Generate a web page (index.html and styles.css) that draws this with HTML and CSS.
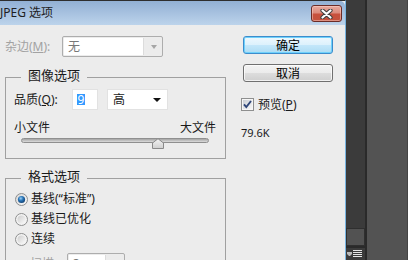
FILE: index.html
```html
<!DOCTYPE html>
<html>
<head>
    <title>JPEG 选项</title>
    <link rel="stylesheet" href="styles.css">
</head>
<body>
    <div class="screen">
        <div class="dialog">
            <div class="titlebar">
                <span class="title">JPEG 选项</span>
                <button class="close-btn" type="button">
                    <svg width="13" height="10" viewBox="0 0 13 10">
                        <path d="M2.5 1.5 L10.5 8.5 M10.5 1.5 L2.5 8.5" stroke="#3e3e3e" stroke-width="4.2" stroke-linecap="round"/>
                        <path d="M2.5 1.5 L10.5 8.5 M10.5 1.5 L2.5 8.5" stroke="#ffffff" stroke-width="2.2" stroke-linecap="round"/>
                    </svg>
                </button>
            </div>

            <div class="client">
                <div class="main-col">
                    <div class="matte-row">
                        <label class="field-label disabled">杂边(<u>M</u>):</label>
                        <div class="combo disabled matte-combo">
                            <span class="combo-field">无</span>
                            <span class="combo-arrow"></span>
                        </div>
                    </div>

                    <div class="group image-group">
                        <div class="group-title">图像选项</div>
                        <div class="quality-row">
                            <label class="quality-label">品质(<u>Q</u>):</label>
                            <div class="num-field"><span class="selected-text">9</span></div>
                            <div class="select-box">
                                <span class="select-value">高</span>
                                <span class="select-arrow"></span>
                            </div>
                        </div>
                        <div class="size-labels">
                            <span>小文件</span>
                            <span>大文件</span>
                        </div>
                        <div class="slider">
                            <div class="slider-track"></div>
                            <svg class="slider-thumb" width="12" height="11" viewBox="0 0 12 11">
                                <defs>
                                    <linearGradient id="thumbGrad" x1="0" y1="0" x2="0" y2="1">
                                        <stop offset="0" stop-color="#f4f4f4"/>
                                        <stop offset="1" stop-color="#cfcfcf"/>
                                    </linearGradient>
                                </defs>
                                <path d="M0.5 10.5 L0.5 5 L6 0.7 L11.5 5 L11.5 10.5 Z" fill="url(#thumbGrad)" stroke="#8a8a8a"/>
                            </svg>
                        </div>
                    </div>

                    <div class="group format-group">
                        <div class="group-title">格式选项</div>
                        <div class="radio-row">
                            <svg class="radio" width="13" height="13" viewBox="0 0 13 13">
                                <defs>
                                    <linearGradient id="radioOn" x1="0" y1="0" x2="1" y2="1">
                                        <stop offset="0" stop-color="#d4d4d4"/>
                                        <stop offset="1" stop-color="#fbfbfb"/>
                                    </linearGradient>
                                    <radialGradient id="dotGrad" cx="0.4" cy="0.35" r="0.7">
                                        <stop offset="0" stop-color="#9ad0f5"/>
                                        <stop offset="0.45" stop-color="#2a76b8"/>
                                        <stop offset="1" stop-color="#0f3c6c"/>
                                    </radialGradient>
                                </defs>
                                <circle cx="6.5" cy="6.5" r="6" fill="url(#radioOn)" stroke="#8e8f8f"/>
                                <circle cx="6.5" cy="6.5" r="3.6" fill="url(#dotGrad)"/>
                            </svg>
                            <span>基线(“标准”)</span>
                        </div>
                        <div class="radio-row">
                            <svg class="radio" width="13" height="13" viewBox="0 0 13 13">
                                <defs>
                                    <linearGradient id="radioOff1" x1="0" y1="0" x2="1" y2="1">
                                        <stop offset="0" stop-color="#cdcdcd"/>
                                        <stop offset="1" stop-color="#fafafa"/>
                                    </linearGradient>
                                </defs>
                                <circle cx="6.5" cy="6.5" r="6" fill="#f2f2f2" stroke="#8e8f8f"/>
                                <circle cx="6.5" cy="6.5" r="4" fill="url(#radioOff1)"/>
                            </svg>
                            <span>基线已优化</span>
                        </div>
                        <div class="radio-row">
                            <svg class="radio" width="13" height="13" viewBox="0 0 13 13">
                                <defs>
                                    <linearGradient id="radioOff2" x1="0" y1="0" x2="1" y2="1">
                                        <stop offset="0" stop-color="#cdcdcd"/>
                                        <stop offset="1" stop-color="#fafafa"/>
                                    </linearGradient>
                                </defs>
                                <circle cx="6.5" cy="6.5" r="6" fill="#f2f2f2" stroke="#8e8f8f"/>
                                <circle cx="6.5" cy="6.5" r="4" fill="url(#radioOff2)"/>
                            </svg>
                            <span>连续</span>
                        </div>
                        <div class="scan-row">
                            <label class="scan-label disabled">扫描:</label>
                            <div class="combo disabled scan-combo">
                                <span class="combo-field">3</span>
                                <span class="combo-arrow"></span>
                            </div>
                        </div>
                    </div>
                </div>

                <div class="side-col">
                    <button class="btn btn-default" type="button">确定</button>
                    <button class="btn" type="button">取消</button>
                    <label class="check-row">
                        <svg class="checkbox" width="13" height="13" viewBox="0 0 13 13">
                            <defs>
                                <linearGradient id="checkGrad" x1="0" y1="0" x2="1" y2="1">
                                    <stop offset="0" stop-color="#cbcfd5"/>
                                    <stop offset="1" stop-color="#f7f7f7"/>
                                </linearGradient>
                            </defs>
                            <rect x="0.5" y="0.5" width="12" height="12" fill="#f6f6f6" stroke="#8e8f8f"/>
                            <rect x="2" y="2" width="9" height="9" fill="url(#checkGrad)"/>
                            <path d="M3 6.3 L5.3 9 L10 3" fill="none" stroke="#2f4679" stroke-width="1.9"/>
                        </svg>
                        <span>预览(<u>P</u>)</span>
                    </label>
                    <div class="size-info">79.6K</div>
                </div>
            </div>
        </div>

        <div class="panel-strip">
            <div class="strip-fill"></div>
            <div class="strip-thumb"></div>
            <div class="strip-foot">
                <svg width="5" height="5" viewBox="0 0 5 5">
                    <path d="M0 0 H5 V2 L3 4 H2 L0 2 Z" fill="#b8b8b8"/>
                </svg>
                <svg width="9" height="8" viewBox="0 0 9 8">
                    <rect x="0" y="0" width="9" height="1" fill="#e6e6e6"/>
                    <rect x="0" y="2" width="9" height="1" fill="#e6e6e6"/>
                    <rect x="0" y="4" width="9" height="1" fill="#e6e6e6"/>
                    <rect x="0" y="6" width="9" height="1" fill="#e6e6e6"/>
                </svg>
            </div>
        </div>
        <div class="panel-main"></div>
    </div>
</body>
</html>
```

FILE: styles.css
```css
* {
    box-sizing: border-box;
}

html,
body {
    margin: 0;
}

body {
    width: 408px;
    height: 260px;
    overflow: hidden;
    background-color: #535353;
    font-family: "Noto Sans", "Noto Sans CJK SC", sans-serif;
    font-size: 12px;
    color: #1a1a1a;
}

.screen {
    display: flex;
    height: 260px;
}

/* dialog window */

.dialog {
    width: 346px;
    display: flex;
    flex-direction: column;
    background-color: #ececec;
    border-top: 1px solid #2e2e2e;
    border-right: 1px solid #78b5e2;
}

.titlebar {
    height: 24px;
    display: flex;
    align-items: flex-start;
    background: linear-gradient(#92b0d4, #bcd3eb);
    border-top-right-radius: 5px;
}

.title {
    line-height: 24px;
    color: #1e1e1e;
}

.close-btn {
    margin: 4px 3px 0 auto;
    width: 31px;
    height: 17px;
    padding: 0;
    display: flex;
    align-items: center;
    justify-content: center;
    border: 1px solid #6b2c27;
    border-radius: 3px;
    background: linear-gradient(#e8aa9f 0%, #dc8b7d 45%, #c8503d 55%, #c4533f 100%);
    box-shadow: inset 0 0 0 1px rgba(255, 220, 210, 0.45);
}

.client {
    flex: 1;
    display: flex;
    gap: 15px;
    padding-top: 11px;
}

.main-col {
    width: 226px;
    padding-left: 5px;
}

.disabled {
    color: #a2a2a2;
}

.matte-row {
    display: flex;
    align-items: center;
    height: 21px;
}

.field-label {
    width: 57px;
    line-height: 16px;
}

.combo {
    display: flex;
    height: 21px;
    border: 1px solid #adadad;
    border-radius: 2px;
    background-color: #ececec;
}

.combo-field {
    flex: 1;
    margin: 1px;
    padding-left: 4px;
    line-height: 17px;
    background-color: #fff;
    border-right: 1px solid #dcdcdc;
}

.combo.disabled .combo-field {
    color: #777;
}

.combo-arrow {
    width: 17px;
    display: flex;
    align-items: center;
    justify-content: center;
}

.combo-arrow::after {
    content: "";
    border-left: 3px solid transparent;
    border-right: 3px solid transparent;
    border-top: 4px solid #a6a6a6;
}

.matte-combo {
    width: 101px;
}

/* group boxes */

.group {
    width: 221px;
    border: 1px solid #a0a0a0;
}

.group-title {
    width: fit-content;
    margin: -11px 0 0 15px;
    padding: 0 7px;
    font-size: 13px;
    line-height: 16px;
    background-color: #ececec;
}

.image-group {
    margin-top: 20px;
    padding-bottom: 9px;
}

.quality-row {
    display: flex;
    align-items: center;
    height: 21px;
    margin-top: 6px;
    padding-left: 8px;
}

.quality-label {
    width: 58px;
    line-height: 16px;
}

.num-field {
    width: 26px;
    height: 21px;
    padding: 4px 0 0 4px;
    background-color: #fff;
    border: 1px solid #e2e2e2;
}

.selected-text {
    display: block;
    width: 8px;
    line-height: 11px;
    text-align: center;
    color: #fff;
    background-color: #3399ff;
}

.select-box {
    width: 61px;
    height: 21px;
    margin-left: 9px;
    display: flex;
    align-items: center;
    padding: 0 6px 0 5px;
    background-color: #fff;
    border: 1px solid #e2e2e2;
}

.select-value {
    flex: 1;
    line-height: 16px;
}

.select-arrow {
    border-left: 4px solid transparent;
    border-right: 4px solid transparent;
    border-top: 4px solid #111;
}

.size-labels {
    display: flex;
    justify-content: space-between;
    margin-top: 11px;
    padding: 0 9px 0 8px;
    line-height: 14px;
}

.slider {
    position: relative;
    height: 11px;
    margin: 1px 16px 0 15px;
}

.slider-track {
    height: 5px;
    margin-top: 3px;
    border: 1px solid #8f8f8f;
    border-radius: 3px;
    background: linear-gradient(#a4a4a4, #dcdcdc);
}

.slider-thumb {
    position: absolute;
    left: 131px;
    top: 0;
}

.format-group {
    margin-top: 19px;
    height: 100px;
}

.radio-row {
    display: flex;
    align-items: center;
    gap: 3px;
    height: 20px;
    padding-left: 9px;
    line-height: 16px;
}

.format-group .group-title + .radio-row {
    margin-top: 5px;
}

.scan-row {
    display: flex;
    margin-top: 4px;
    padding-left: 24px;
}

.scan-label {
    width: 37px;
    line-height: 21px;
}

.scan-combo {
    width: 58px;
}

/* right column */

.side-col {
    width: 95px;
}

.btn {
    display: block;
    width: 90px;
    height: 18px;
    margin-left: 2px;
    padding: 0;
    font: inherit;
    line-height: 15px;
    color: #000;
    border: 1px solid #707070;
    border-radius: 3px;
    background: linear-gradient(#f3f3f3 0%, #ebebeb 50%, #dddddd 51%, #cfcfcf 100%);
    box-shadow: inset 0 0 0 1px rgba(255, 255, 255, 0.7);
}

.btn-default {
    border-color: #3c8ccc;
    background: linear-gradient(#eef8fe 0%, #dcf1fc 50%, #c4e7fa 51%, #addcf4 100%);
    box-shadow: inset 0 0 0 1px #6fd1fb;
}

.btn + .btn {
    margin-top: 10px;
}

.check-row {
    display: flex;
    align-items: center;
    gap: 4px;
    height: 15px;
    margin-top: 15px;
    line-height: 15px;
}

.size-info {
    margin-top: 14px;
    font-size: 11px;
    line-height: 14px;
}

/* photoshop panels behind */

.panel-strip {
    width: 21px;
    display: flex;
    flex-direction: column;
    background-color: #3b3b3b;
    border-right: 2px solid #2a2a2a;
}

.strip-fill {
    flex: 1;
}

.strip-thumb {
    height: 18px;
    background-color: #525252;
    border: 1px solid #2f2f2f;
}

.strip-foot {
    height: 14px;
    display: flex;
    align-items: center;
    gap: 1px;
    padding-left: 1px;
    border-top: 2px solid #2a2a2a;
}

.panel-main {
    flex: 1;
    border-right: 1px solid #444;
}
```
